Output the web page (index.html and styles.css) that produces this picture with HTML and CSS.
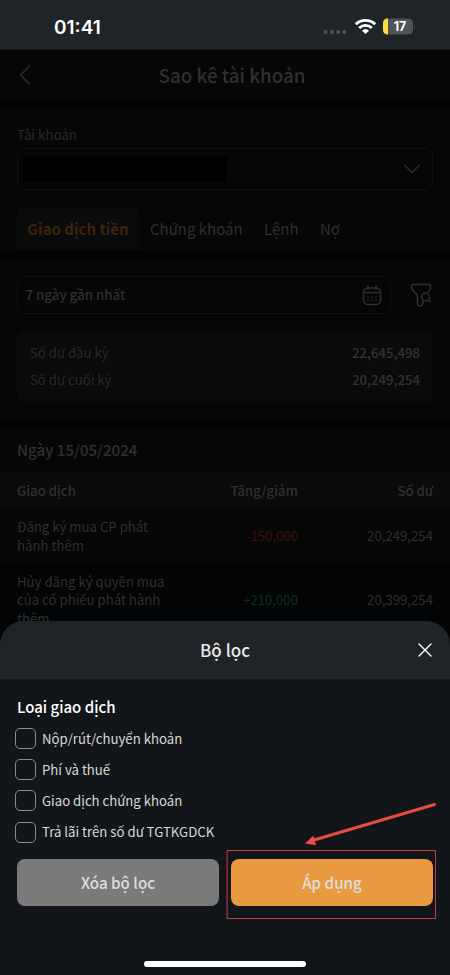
FILE: index.html
```html
<!DOCTYPE html>
<html lang="vi">
<head>
<meta charset="utf-8">
<title>Sao kê tài khoản</title>
<link rel="stylesheet" href="styles.css">
</head>
<body>
<div class="phone">
  <div class="status">
    <span class="clock">01:41</span>
    <svg class="status-icons" width="94" height="20" viewBox="0 0 94 20">
      <g fill="#53585a"><circle cx="4.5" cy="14" r="2"/><circle cx="10.8" cy="14" r="2"/><circle cx="17.2" cy="14" r="2"/><circle cx="23.4" cy="14" r="2"/></g>
      <g fill="none" stroke="#fff" stroke-width="2.8"><path d="M34.8 6.300a14.200 14.200 0 0 1 19.400 0"/><path d="M38.200 9.900a9.200 9.200 0 0 1 12.600 0"/></g>
      <path fill="#fff" d="M41 12.700a5.200 5.200 0 0 1 7 0L44.500 16z"/>
      <rect x="62" y="0.500" width="30" height="16" rx="4.600" fill="#4e5355"/>
      <path fill="#fddb45" d="M67 .5h-.4A4.600 4.600 0 0 0 62 5.100v6.800a4.600 4.600 0 0 0 4.600 4.600H67z"/>
      <path fill="#4e5355" d="M93 6.200q1.500 2.300 0 4.600z"/>
      <text x="79" y="13" class="battery" text-anchor="middle">17</text>
    </svg>
  </div>

  <header class="topbar">
    <svg class="back" width="12" height="20" viewBox="0 0 12 20"><path d="M10.500 1 1.500 10l9 9"/></svg>
    <h1>Sao kê tài khoản</h1>
  </header>

  <section class="account">
    <div class="label">Tài khoản</div>
    <div class="select">
      <div class="masked"></div>
      <svg width="16" height="10" viewBox="0 0 16 10"><path d="m1 1.500 7 7 7-7"/></svg>
    </div>
    <nav class="tabs">
      <span class="tab active">Giao dịch tiền</span>
      <span class="tab t2">Chứng khoán</span>
      <span class="tab t3">Lệnh</span>
      <span class="tab">Nợ</span>
    </nav>
  </section>

  <section class="summary">
    <div class="filters">
      <div class="range">
        <span class="range-text">7 ngày gần nhất</span>
        <svg width="20" height="21" viewBox="0 0 20 21"><rect x="1.500" y="3" width="17" height="16.500" rx="4"/><path d="M1.500 7.500h17M6 .8v4M14 .8v4"/><path class="dots" d="M6 12h.1M10 12h.1M14 12h.1M6 15.300h.1M10 15.300h.1M14 15.300h.1"/></svg>
      </div>
      <svg class="funnel" width="22" height="25" viewBox="0 0 22 25"><path d="M18.200 9c1.700-1.500 2.300-2.300 2.300-4V3.200c0-1-.7-1.700-1.700-1.700H3.200c-1 0-1.700.7-1.700 1.700v1.300c0 1.500.6 2.200 1.500 3.100l3.300 3.200c.8.8 1.200 1.500 1.200 2.600v7.200c0 2 1.200 2.900 2.800 2.100 1.900-.9 2.800-2 2.800-4.300"/><circle cx="15.500" cy="14" r="4"/><path d="m18.500 17 1.700 1.700"/></svg>
    </div>
    <div class="balances">
      <div class="balance"><span>Số dư đầu kỳ</span><b>22,645,498</b></div>
      <div class="balance"><span>Số dư cuối kỳ</span><b>20,249,254</b></div>
    </div>
  </section>

  <section class="history">
    <h2>Ngày 15/05/2024</h2>
    <div class="row head"><span>Giao dịch</span><span>Tăng/giảm</span><span>Số dư</span></div>
    <div class="row first"><span>Đăng ký mua CP phát<br>hành thêm</span><span class="down">-150,000</span><span>20,249,254</span></div>
    <div class="row second"><span>Hủy đăng ký quyền mua<br>của cổ phiếu phát hành<br>thêm</span><span class="up">+210,000</span><span>20,399,254</span></div>
  </section>

  <div class="sheet">
    <div class="sheet-head">
      <h3>Bộ lọc</h3>
      <svg class="close" width="14" height="14" viewBox="0 0 14 14"><path d="m1 1 12 12M13 1 1 13"/></svg>
    </div>
    <div class="sheet-body">
      <h4>Loại giao dịch</h4>
      <div class="options">
        <label><i></i><span>Nộp/rút/chuyển khoản</span></label>
        <label><i></i><span>Phí và thuế</span></label>
        <label><i></i><span>Giao dịch chứng khoán</span></label>
        <label><i></i><span>Trả lãi trên số dư TGTKGDCK</span></label>
      </div>
      <div class="actions">
        <button class="clear">Xóa bộ lọc</button>
        <button class="apply">Áp dụng</button>
      </div>
    </div>
    <div class="home"></div>
  </div>

  <svg class="marker" width="450" height="130" viewBox="0 0 450 130">
    <path d="M434.500 4.500 314 40" stroke="#e94b43" stroke-width="3" stroke-linecap="round"/>
    <path d="m305 43.500 8.500-8 2.500 9.800z" fill="#f04e46"/>
    <rect x="227.500" y="50.500" width="208" height="68" fill="none" stroke="#c73f3c"/>
  </svg>
</div>
</body>
</html>
```
FILE: styles.css
```css
* { box-sizing: border-box; }
body { margin: 0; background: #040404; }
.phone {
  position: relative;
  width: 450px;
  height: 975px;
  overflow: hidden;
  background: #060606;
  color: #303030;
  font: 400 15px/20px "Noto Sans CJK SC", "Noto Sans", sans-serif;
  white-space: nowrap;
}
h1, h2, h3, h4 { margin: 0; font-weight: 500; }
svg { display: block; flex: none; fill: none; stroke-linecap: round; stroke-linejoin: round; }
.status {
  height: 50px;
  display: flex;
  justify-content: space-between;
  padding: 18px 34px 0 54px;
  background: #1f2428;
  border-bottom: 1px solid #171a1c;
}
.clock { font: 600 19px/19px Inter, sans-serif; color: #fff; }
.status-icons { stroke-linecap: butt; margin-right: 1px; }
.battery { font: 700 12.5px Inter, sans-serif; fill: #fff; }

.topbar { display: grid; grid-template-columns: 20px 1fr 6px; align-items: center; height: 50px; padding: 0 17px; }
.back { stroke: #303030; stroke-width: 1.5; margin-left: 2px; }
h1 { font-size: 18.8px; line-height: 24px; text-align: center; }
.topbar h1 { margin-top: -1px; }

.account { height: 150px; padding: 24px 17px 0; border-top: 8px solid #030304; }
.label { font-size: 13.3px; line-height: 22px; color: #292929; margin-top: -8px; height: 24px; }
.select {
  display: flex;
  align-items: center;
  justify-content: space-between;
  height: 42px;
  padding: 0 12px 0 5px;
  border: 1px solid #111;
  border-radius: 8px;
}
.select svg { stroke: #303030; stroke-width: 1.4; }
.masked { width: 204px; height: 25px; background: #000; }
.tabs { display: flex; margin-top: 17px; height: 43px; line-height: 43px; font-size: 15px; }
.tab.active { width: 122px; text-align: center; margin-right: 11px; background: #0a0a0a; border-radius: 5px 5px 0 0; color: #3b250e; font-weight: 700; }
.t2 { width: 114px; }
.t3 { width: 56px; }

.summary { height: 169px; padding: 18px 17px 0; }
.summary, .history { border-top: 8px solid #030304; }
.filters { display: flex; align-items: center; }
.range {
  display: flex;
  align-items: center;
  justify-content: space-between;
  width: 374px;
  height: 38px;
  padding: 0 8px 0 7.5px;
  border: 1px solid #111;
  border-radius: 8px;
  font-size: 13.3px;
  font-weight: 500;
}
.range svg { stroke: #303030; stroke-width: 1.4; }
.range .dots { stroke-width: 1.6; }
.funnel { margin-left: 19px; stroke: #303030; stroke-width: 1.5; }
.balances { margin-top: 17px; height: 71px; padding: 8px 13px; border-radius: 5px; background: #0a0a0a; }
.balance { display: flex; justify-content: space-between; font-size: 13.2px; line-height: 27px; color: #292929; }
.balance b { font-weight: 500; color: #333; }

.history { height: 221px; overflow: hidden; }
h2 { height: 46px; padding-left: 17px; font-size: 15.1px; line-height: 45px; }
.row { display: grid; grid-template-columns: 160px 121px 135px; align-items: center; padding: 2px 17px 0; font-size: 13.2px; line-height: 18.5px; }
.row span:nth-child(n+2) { text-align: right; }
.head { height: 35px; background: #0a0a0a; font-weight: 500; }
.first { height: 55px; }
.second { height: 73px; background: #030405; }
.row .down { color: #3b0f0e; }
.row .up { color: #0a3216; }

.sheet {
  position: absolute;
  left: 0;
  top: 621px;
  width: 450px;
  height: 354px;
  border-radius: 24px 24px 0 0;
  overflow: hidden;
  background: #12161a;
}
.sheet-head { display: grid; grid-template-columns: 14px 1fr 14px; align-items: center; height: 58px; padding: 0 18px; background: #1f2428; }
.sheet-head h3 { grid-column: 2; font-size: 17px; color: #e8e8e8; text-align: center; }
.close { stroke: #fff; stroke-width: 1.4; }
.sheet-body { padding: 17px 17px 0; }
h4 { font-size: 15px; line-height: 21px; color: #fff; height: 21px; }
.options { margin: 6px 0 0 -2px; }
.options label { display: flex; align-items: center; height: 31.2px; font-size: 13.2px; color: #d8d9da; }
.options i { width: 21px; height: 21px; margin-right: 6px; border: 1px solid #898c8e; border-radius: 5px; }
.actions { display: flex; gap: 12px; margin-top: 11px; }
button { flex: 1; height: 47px; border: 0; border-radius: 8px; font: inherit; font-weight: 500; font-size: 15.2px; color: #dedede; }
.clear { background: #7a7a7b; }
.apply { background: #e99a41; }
.home { position: absolute; left: 144px; bottom: 8px; width: 162px; height: 6px; border-radius: 3px; background: #fff; }
.marker { position: absolute; left: 0; top: 800px; }
```
